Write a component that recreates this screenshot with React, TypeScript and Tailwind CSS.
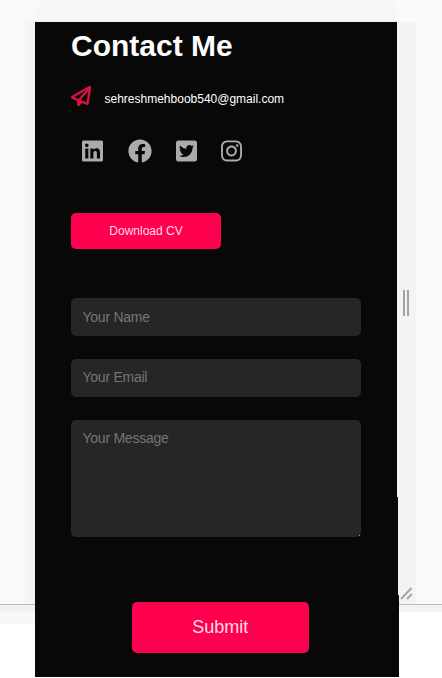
import { FaFacebook, FaInstagram, FaLinkedin, FaTwitterSquare } from "react-icons/fa";
import { FaRegPaperPlane } from "react-icons/fa6";

function ContactPanel() {
  return (
    <main className="flex h-[655px] flex-col items-start bg-[#080808] pl-9">
      <h1 className="mt-1 h-10 text-[30px] leading-10 font-bold text-white">Contact Me</h1>
      <p className="mt-[19px] flex h-6 items-center text-[12px] text-white">
        <FaRegPaperPlane className="mb-[3px] size-5 stroke-[#dd1344] stroke-[12px] text-[#dd1344]" />
        <span className="ml-[13.5px] pt-1">sehreshmehboob540@gmail.com</span>
      </p>
      <nav className="mt-[30px] ml-[11px] flex h-6 items-center text-[24px] text-[#ababab]">
        <FaLinkedin className="w-[21px]" />
        <FaFacebook className="ml-[25px] w-6" />
        <FaTwitterSquare className="ml-6 w-[21px]" />
        <FaInstagram className="ml-6 w-[21px]" />
      </nav>
      <button className="mt-[50px] h-9 w-[150px] rounded-[5px] bg-[#ff004f] text-[12px] text-[#ffdce8]">Download CV</button>
      <form className="mt-[49px] flex w-[289.5px] flex-col">
        <input placeholder="Your Name" className="h-[38px] rounded-[5px] bg-[#262626] px-[11.5px] text-[14px] tracking-[-0.25px] text-white placeholder:text-[#757575]" />
        <input placeholder="Your Email" className="mt-[23px] h-[38px] rounded-[5px] bg-[#262626] px-[11.5px] pb-[2px] text-[14px] tracking-[-0.25px] text-white placeholder:text-[#757575]" />
        <div className="mt-[23px] flex h-[117px] items-end rounded-[5px] bg-[#262626] pr-px pb-px">
          <textarea placeholder="Your Message" className="h-full grow resize-none bg-transparent px-[11.5px] pt-2 text-[14px] tracking-[-0.25px] text-white placeholder:text-[#757575]" />
          <i className="size-px bg-[#999999]" />
        </div>
        <button className="mt-[65px] ml-[61px] h-[51px] w-[176.5px] rounded-[5px] bg-[#ff004f] text-[18px] text-[#ffdce8]">Submit</button>
      </form>
    </main>
  );
}

export default function App() {
  return (
    <div className="flex h-[678px] w-[442px] overflow-hidden bg-white font-['Liberation_Sans',Arial,sans-serif]">
      <div className="w-[35px] shrink-0">
        <div className="h-[22px] bg-[#f9f9f9]" />
        <div className="h-[582px] bg-linear-to-r from-[#f9f9f9] from-60% to-[#f2f2f2]" />
        <div className="h-px bg-[#bbbbbb]" />
        <div className="h-[7px] bg-[#f2f2f2]" />
        <div className="h-3 bg-[#f8f8f8]" />
      </div>
      <div className="w-[364px] shrink-0">
        <div className="mr-[2px] h-[22px] bg-linear-to-b from-[#f9f9f9] to-[#f4f4f4]" />
        <ContactPanel />
      </div>
      <div className="grow">
        <div className="-ml-[2px] h-[22px] bg-[#fafafa]" />
        <div className="-ml-[2px] flex h-[475px] bg-[#fafafa]">
          <div className="flex w-[19px] justify-center gap-[2px] bg-[#f1f3f5] pt-[268px] pr-px">
            <i className="h-[26px] w-[2px] bg-[#a3a3a3]" />
            <i className="h-[26px] w-[2px] bg-[#a3a3a3]" />
          </div>
        </div>
        <div className="-ml-px flex h-[98px] bg-[#fafafa]">
          <div className="w-[18px] bg-[#f1f3f5]" />
        </div>
        <div className="flex h-[9px] bg-[#fafafa]">
          <div className="flex w-[17px] items-end bg-[#f1f3f5]">
            <svg viewBox="0 0 17 17" className="-mt-2 mb-1 h-[17px] w-[17px] shrink-0 overflow-visible" fill="none" stroke="#a3a3a3" strokeWidth="1.9">
              <path d="M2 16 12.5 5M8 16l5-5" />
            </svg>
          </div>
        </div>
        <div className="h-px bg-[#bbbbbb]" />
        <div className="h-[7px] bg-[#f2f2f2]" />
      </div>
    </div>
  );
}
